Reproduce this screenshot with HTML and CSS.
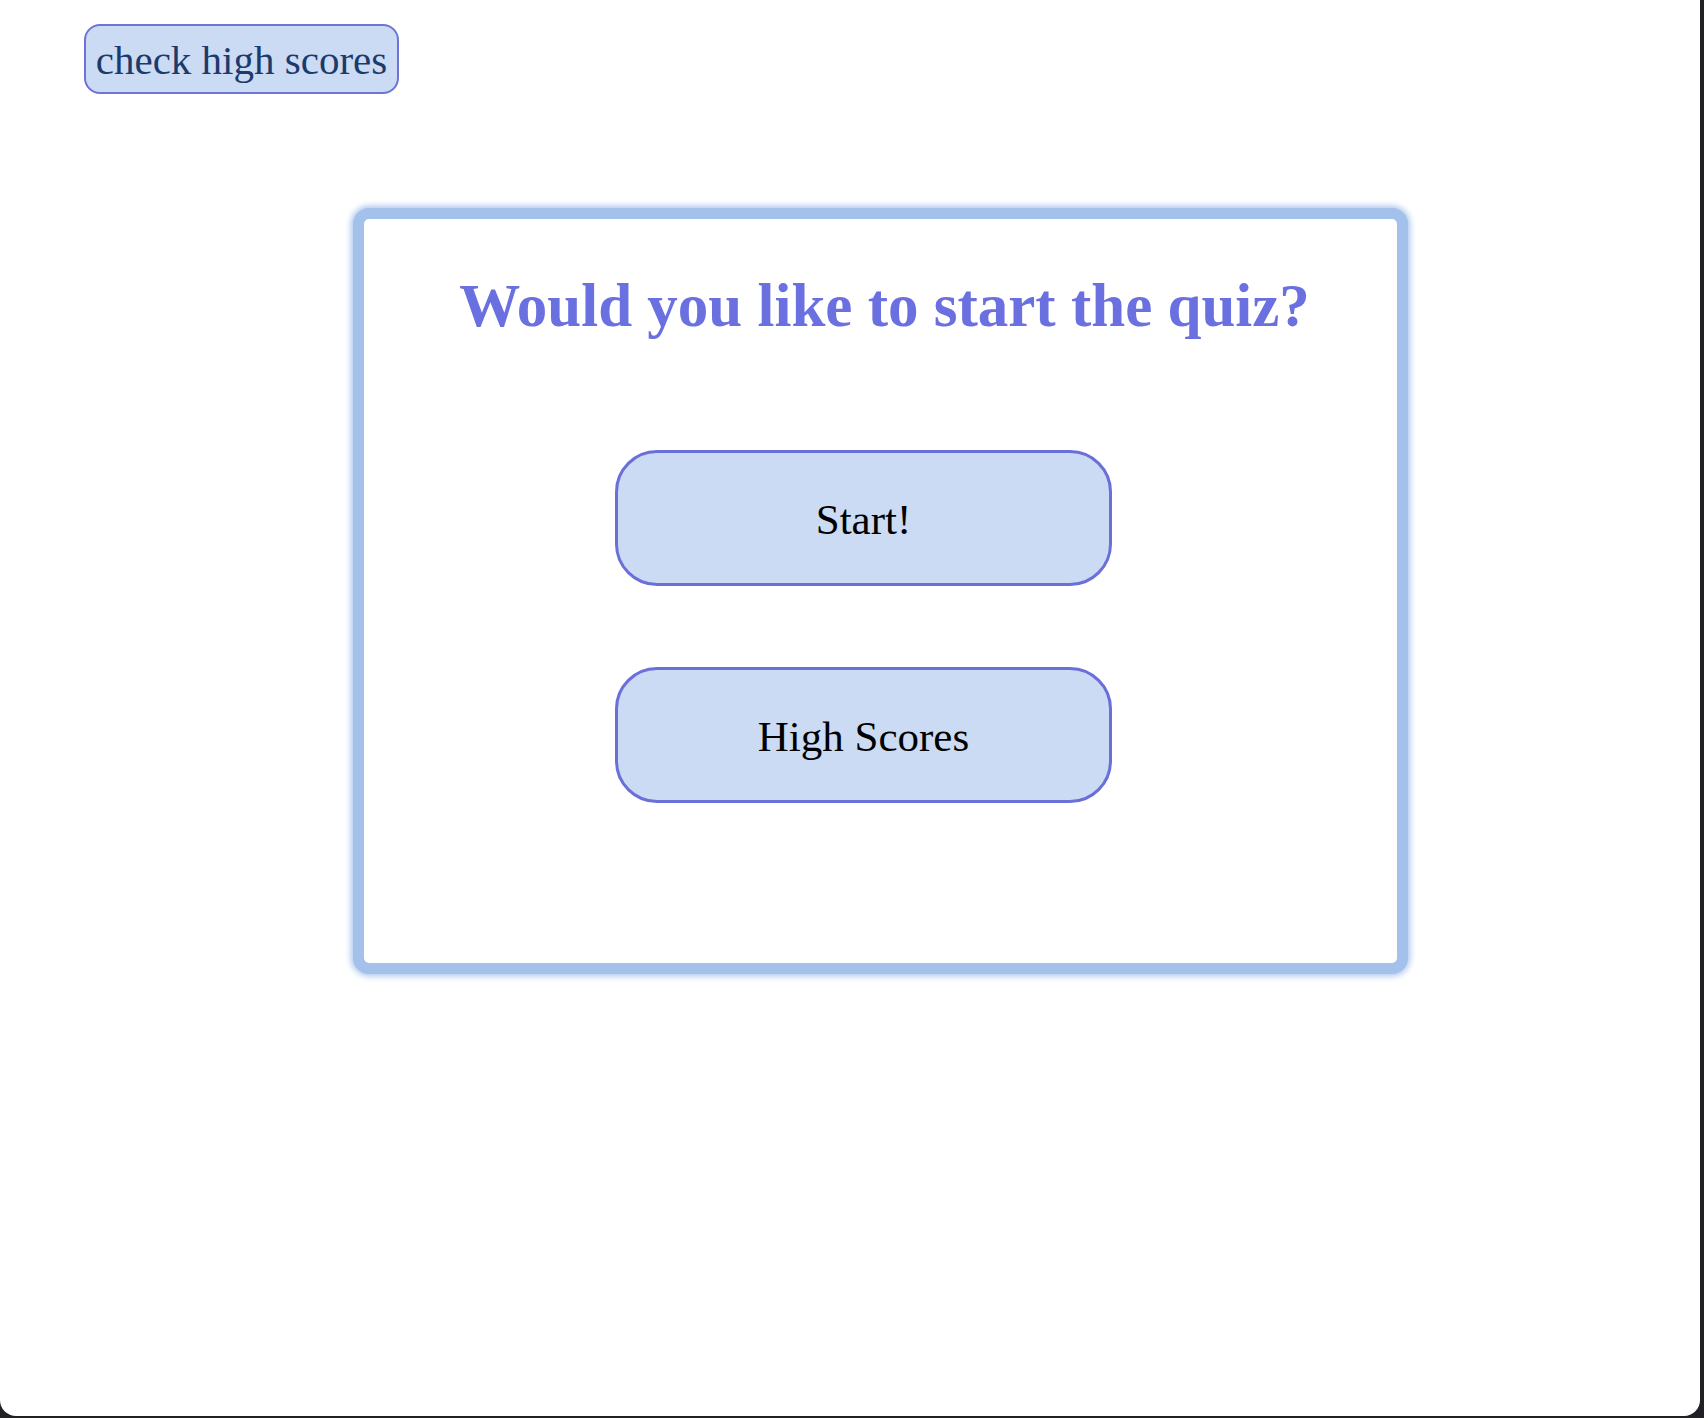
FILE: index.html
```html
<!DOCTYPE html>
<html lang="en">
<head>
<meta charset="utf-8">
<title>Quiz</title>
<link rel="stylesheet" href="styles.css">
</head>
<body>
<div class="window">
  <header class="topbar">
    <button class="scores-link">check high scores</button>
  </header>
  <main class="stage">
    <section class="card">
      <h1 class="title">Would you like to start the quiz?</h1>
      <div class="actions">
        <button class="big-btn">Start!</button>
        <button class="big-btn">High Scores</button>
      </div>
    </section>
  </main>
</div>
</body>
</html>
```

FILE: styles.css
```css
html {
  background: #1f2127;
}
body {
  margin: 0;
  width: 1704px;
  height: 1418px;
  overflow: hidden;
  background: #1f2127;
  font-family: "Liberation Serif", "DejaVu Serif", serif;
}
.window {
  width: 1700px;
  height: 1416px;
  background: #ffffff;
  border-radius: 0 0 16px 16px;
  box-sizing: border-box;
  padding-top: 24px;
}
.topbar {
  padding-left: 84px;
  display: flex;
}
.scores-link {
  box-sizing: border-box;
  height: 70px;
  width: 315px;
  padding: 2px 8px 0 8px;
  font-family: "Liberation Serif", "DejaVu Serif", serif;
  font-size: 41px;
  color: #1c3a6b;
  background: #cbdbf3;
  border: 2px solid #6f73d8;
  border-radius: 16px;
  white-space: nowrap;
  cursor: pointer;
}
.stage {
  padding-top: 114px;
  padding-left: 353px;
}
.card {
  box-sizing: border-box;
  width: 1055px;
  height: 766px;
  border: 11px solid #a4c1ec;
  border-radius: 16px;
  box-shadow: 0 0 6px 2px #a9c5ee;
  background: #ffffff;
  display: flex;
  flex-direction: column;
  align-items: center;
}
.title {
  margin: 52px 0 0 0;
  padding-left: 8px;
  font-size: 61px;
  line-height: 69px;
  font-weight: bold;
  color: #6b70e0;
  white-space: nowrap;
}
.actions {
  margin-top: 110px;
  margin-right: 34px;
  display: flex;
  flex-direction: column;
  gap: 81px;
}
.big-btn {
  box-sizing: border-box;
  width: 497px;
  height: 136px;
  padding: 3px 0 0 0;
  background: #cbdbf3;
  border: 3px solid #6b6fd9;
  border-radius: 42px;
  font-family: "Liberation Serif", "DejaVu Serif", serif;
  font-size: 43px;
  color: #000000;
  cursor: pointer;
}
```
